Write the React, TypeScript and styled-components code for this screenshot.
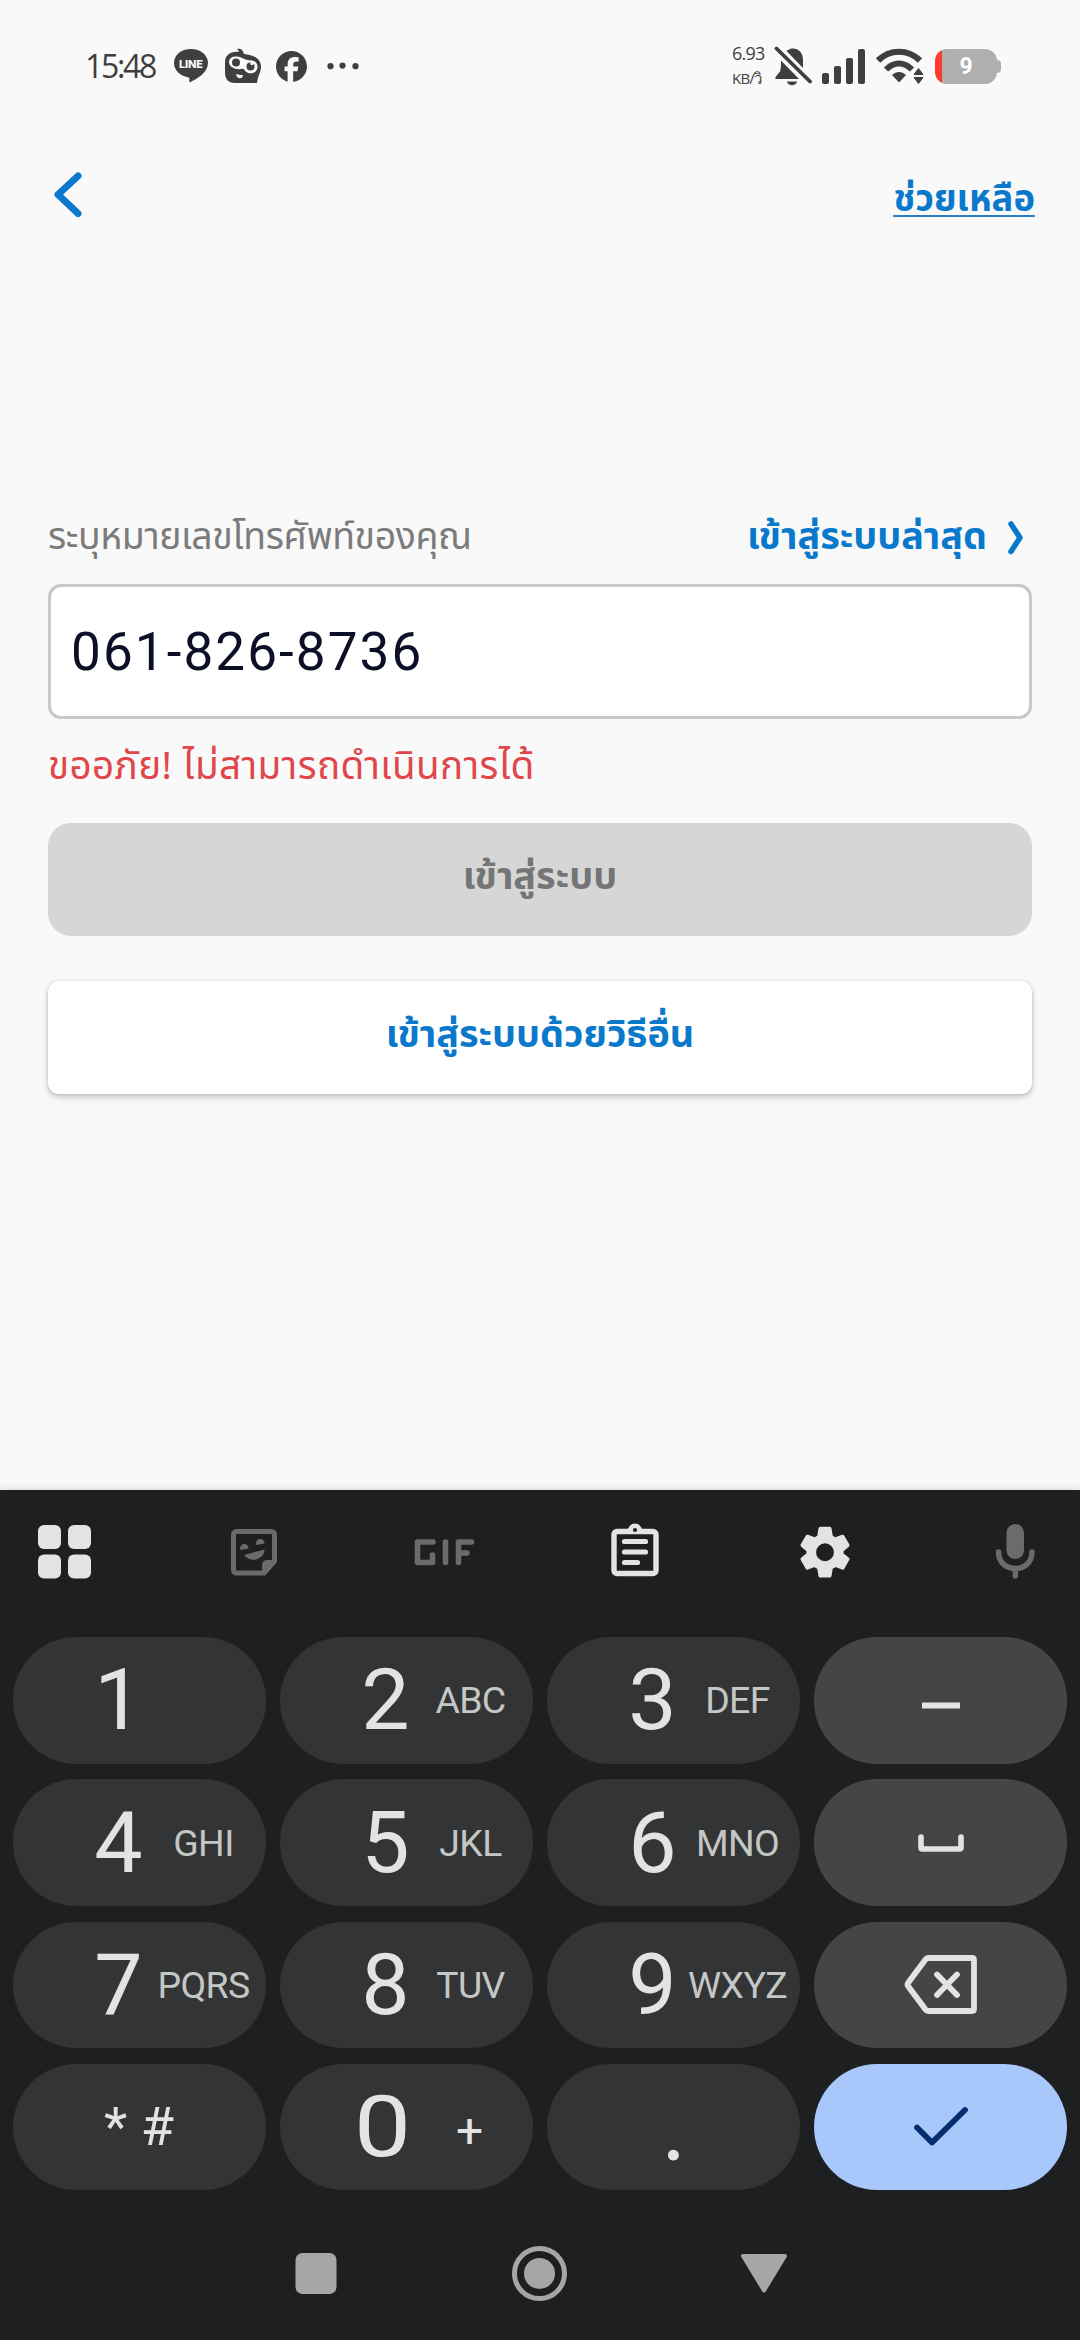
import React from "react";
import styled, { createGlobalStyle } from "styled-components";

const ui = `"Noto Sans Thai", "Noto Sans", "Open Sans", sans-serif`;

const GlobalStyle = createGlobalStyle`
  * { box-sizing: border-box; }
  body { margin: 0; background: #f9f9f9; font-family: ${ui}; }
  button { border: 0; padding: 0; background: none; font: inherit; color: inherit; }
  svg { display: block; flex: none; }
`;

const Screen = styled.div`
  width: 1080px;
  height: 2340px;
  display: flex;
  flex-direction: column;
  overflow: hidden;
`;

const StatusBar = styled.header`
  height: 132px;
  flex: none;
  display: flex;
  justify-content: space-between;
  align-items: flex-start;
  padding: 40px 79px 0 85px;
  color: #3f3f3f;
`;

const StatusGroup = styled.div<{ $gap: number }>`
  height: 52px;
  display: flex;
  align-items: center;
  gap: ${(p) => p.$gap}px;
`;

const Clock = styled.time`
  width: 73px;
  font: 400 32px/52px "Open Sans", sans-serif;
  letter-spacing: -2.3px;
  white-space: nowrap;
`;

const NetSpeed = styled.div`
  display: flex;
  flex-direction: column;
  width: 32px;
  font: 400 18px/25px "Open Sans", sans-serif;
  letter-spacing: -0.8px;
  white-space: nowrap;
`;

const Unit = styled.span`
  font-size: 15px;
`;

const Battery = styled.div`
  display: flex;
  align-items: center;
  height: 35px;
  margin-left: 1px;
`;

const BatteryBody = styled.div`
  width: 62px;
  height: 35px;
  border-radius: 12px;
  display: flex;
  align-items: center;
  justify-content: center;
  color: #fff;
  font: 700 23px/35px Roboto, sans-serif;
  background: linear-gradient(90deg, #ff3b30 7px, #afafaf 7px);
`;

const BatteryTip = styled.div`
  width: 4px;
  height: 13px;
  border-radius: 0 5px 5px 0;
  background: #afafaf;
`;

const TopBar = styled.nav`
  height: 128px;
  flex: none;
  display: flex;
  justify-content: space-between;
  align-items: flex-start;
  padding: 36px 45px 0 50px;
`;

const HelpLink = styled.a`
  margin-top: 10px;
  height: 39px;
  border-bottom: 2px solid #2e7fc0;
  color: #0a79cb;
  font-weight: 700;
  font-size: 36.4px;
  line-height: 44px;
  white-space: nowrap;
`;

const Form = styled.main`
  flex: none;
  height: 1230px;
  display: flex;
  flex-direction: column;
  padding: 246px 48px 0;
`;

const LabelRow = styled.div`
  height: 78px;
  display: flex;
  justify-content: space-between;
  align-items: flex-start;
  padding-right: 6px;
`;

const Label = styled.label`
  color: #7b7b7b;
  font-size: 37.4px;
  letter-spacing: -0.4px;
  line-height: 64px;
  white-space: nowrap;
`;

const RecentLink = styled.a`
  display: flex;
  align-items: center;
  gap: 19px;
  color: #0a79cb;
  font-weight: 700;
  font-size: 37.8px;
  line-height: 63px;
  white-space: nowrap;
`;

const PhoneField = styled.div`
  height: 135px;
  flex: none;
  border: 3px solid #c8c8c8;
  border-radius: 13px;
  background: #fff;
  display: flex;
  align-items: center;
  padding-left: 20px;
  color: #0b1026;
  font: 400 53px/60px Roboto, sans-serif;
  letter-spacing: 2.1px;
`;

const ErrorText = styled.p`
  margin: 17px 0 0;
  height: 87px;
  color: #e0474b;
  font-size: 38.6px;
  letter-spacing: 0.4px;
  line-height: 63px;
  white-space: nowrap;
`;

const Action = styled.button<{ $primary?: boolean }>`
  flex: none;
  height: 113px;
  width: 100%;
  display: flex;
  align-items: center;
  justify-content: center;
  padding-bottom: 3px;
  font-weight: 700;
  font-size: 37.8px;
  line-height: 60px;
  border-radius: ${(p) => (p.$primary ? 23 : 11)}px;
  background: ${(p) => (p.$primary ? "#d6d6d6" : "#ffffff")};
  color: ${(p) => (p.$primary ? "#757575" : "#0a79cb")};
  margin-bottom: ${(p) => (p.$primary ? 45 : 0)}px;
  box-shadow: ${(p) => (p.$primary ? "none" : "0 3px 6px rgba(0,0,0,0.22), 0 0 3px rgba(0,0,0,0.12)")};
`;

const Keyboard = styled.section`
  flex: none;
  height: 850px;
  background: #1e1f21;
  display: flex;
  flex-direction: column;
  box-shadow: 0 0 8px rgba(0, 0, 0, 0.16);
`;

const Tools = styled.div`
  height: 147px;
  padding: 28px 30px 0 29px;
  display: flex;
  justify-content: space-between;
  align-items: flex-start;
`;

const Keys = styled.div`
  padding: 0 13px;
  display: grid;
  grid-template-columns: repeat(4, 253px);
  grid-template-rows: repeat(4, 126.5px);
  column-gap: 14px;
  row-gap: 15.8px;
`;

const Key = styled.button<{ $tone?: "action" | "confirm" }>`
  border-radius: 63px;
  display: flex;
  align-items: center;
  justify-content: ${(p) => (p.$tone ? "center" : "flex-start")};
  padding-left: ${(p) => (p.$tone ? 0 : 62)}px;
  background: ${(p) =>
    p.$tone === "confirm" ? "#a8c7fa" : p.$tone === "action" ? "#444645" : "#333436"};
  color: #e3e3e3;
`;

const Digit = styled.span`
  flex: none;
  width: 87px;
  text-align: center;
  font: 400 86px/100px Roboto, sans-serif;
`;

const Zero = styled(Digit)`
  margin: 0 3px 0 -3px;
  transform: scaleX(1.18);
`;

const Period = styled(Digit)`
  margin-left: 21px;
  font-family: Lato, sans-serif;
`;

const Letters = styled.span`
  flex: none;
  width: 83px;
  display: flex;
  justify-content: center;
  white-space: nowrap;
  color: #c4c7c5;
  font: 400 37.4px/60px Roboto, sans-serif;
  letter-spacing: -0.6px;
`;

const Symbols = styled.span<{ $size: number; $left: number; $top: number; $weight?: number }>`
  font: ${(p) => p.$weight ?? 400} ${(p) => p.$size}px/60px Roboto, sans-serif;
  margin-left: ${(p) => p.$left}px;
  margin-top: ${(p) => p.$top}px;
  white-space: nowrap;
`;

const NavBar = styled.div`
  padding-top: 53px;
  display: flex;
  justify-content: center;
  gap: 164px;
`;

const LineIcon = () => (
  <svg width="36" height="36" viewBox="0 0 36 36">
    <path fill="#3f3f3f" d="M18 1C8.300 1 1 7 1 15c0 7.200 6 13 14 14.200 1.800.4 1.500 1.400 1.200 4.300 0 .6.500.9 1.200.5C23.500 31 35 25 35 15 35 7 27.500 1 18 1Z" />
    <text x="18" y="19.500" textAnchor="middle" fontFamily="Inter, sans-serif" fontWeight="800" fontSize="11" textLength="24" fill="#f9f9f9">LINE</text>
  </svg>
);

const RobotIcon = () => (
  <svg width="37" height="36" viewBox="0 0 37 36">
    <path fill="#3f3f3f" d="M13 1c4-1 6 1 7 5 9 1 17 4 17 13 0 5-3 8-4 16H11C4 35 1 31 1 24V14C1 7 7 3 15 4c0-1-1-2-2-3Z" />
    <path fill="#f9f9f9" d="M12 8.500c4 0 6.500 1.500 9.500 3 3 1.200 6 .5 8.500 1.500 4 2 4.500 7 2 10-3 3.500-9 3-11.500-1-1.500-2-3-.8-5.500-.8-5 0-10-2.700-10-7.200 0-3.500 3-5.500 7-5.500Z" />
    <circle cx="12" cy="14.500" r="4" fill="#3f3f3f" />
    <circle cx="26.500" cy="18.500" r="4" fill="#3f3f3f" />
    <circle cx="28" cy="15.500" r="1.700" fill="#f9f9f9" />
    <path d="M12 26c3 1 5 1 7 1 0 4-6 5-7-1Z" fill="#f9f9f9" />
  </svg>
);

const FacebookIcon = () => (
  <svg width="31" height="31" viewBox="0 0 24 24">
    <path fill="#3f3f3f" d="M24 12.070C24 5.400 18.630 0 12 0S0 5.400 0 12.070c0 5.700 3.900 10.400 9 11.700v-8H6.600v-3.700H9v-1.600c0-4 1.900-5.900 5.900-5.900.8 0 2.100.1 2.600.3v3.400c-.3 0-.8-.1-1.400-.1-2 0-2.800.8-2.800 2.700v1.200h4l-.7 3.700h-3.300v8.200C19.300 23.200 24 18.200 24 12.070Z" />
  </svg>
);

const DotsIcon = () => (
  <svg width="38" height="8" viewBox="0 0 38 8" fill="#3f3f3f">
    <circle cx="8.500" cy="4.200" r="3.100" />
    <circle cx="20.500" cy="3.600" r="3.100" />
    <circle cx="33.500" cy="4.200" r="3.100" />
  </svg>
);

const BellOffIcon = () => (
  <svg width="38" height="40" viewBox="0 0 38 40" fill="#3f3f3f">
    <path d="M13 4.500C20-.5 29 4 29 14v8L12.500 5Z" />
    <path d="M7 14.500 25 33H1.500v-2L6 25.500c1-3 1-7 1-11Z" />
    <path d="M13 35.500h10c-1 5-9 5-10 0Z" />
    <path d="M2.500 2.500 36 35.500" stroke="#3f3f3f" strokeWidth="3.800" strokeLinecap="round" />
  </svg>
);

const SignalIcon = () => (
  <svg width="44" height="35" viewBox="0 0 44 35" fill="#3f3f3f">
    <rect x="0" y="24" width="7" height="11" rx="2" />
    <rect x="12" y="17" width="7" height="18" rx="2" />
    <rect x="24" y="9" width="7" height="26" rx="2" />
    <rect x="36" y="0" width="7" height="35" rx="2" />
  </svg>
);

const WifiIcon = () => (
  <svg width="48" height="36" viewBox="0 0 48 36" fill="none">
    <path d="M2 12.500C14 .8 32 .8 44 12.500" stroke="#3f3f3f" strokeWidth="6.200" />
    <path d="M10 21.500C18 13.500 28 13.500 36 21.500" stroke="#3f3f3f" strokeWidth="6" />
    <path d="M16 27c4.500-4 9.500-4 14 0l-7 7.500Z" fill="#3f3f3f" />
    <path d="M38 26.500 42.500 20.500 47 26.500Z M38 29.500h9L42.500 35.500Z" fill="#3f3f3f" stroke="#3f3f3f" strokeWidth="1" strokeLinejoin="round" />
  </svg>
);

const BackIcon = () => (
  <svg width="36" height="54" viewBox="0 0 36 54" fill="none">
    <path d="M28 8 8 26.500 28 45.500" stroke="#0a79cb" strokeWidth="7" strokeLinecap="round" strokeLinejoin="round" />
  </svg>
);

const ForwardIcon = () => (
  <svg width="20" height="38" viewBox="0 0 20 38" fill="none">
    <path d="M5 5 14 18.700 5 32.500" stroke="#0a79cb" strokeWidth="5.500" strokeLinecap="round" strokeLinejoin="round" />
  </svg>
);

const Tool = ({ children, color = "#e3e3e3" }: { children: React.ReactNode; color?: string }) => (
  <svg width="70" height="70" viewBox="0 0 70 70" fill={color}>
    {children}
  </svg>
);

const GridTool = () => (
  <Tool>
    <rect x="9" y="7" width="23" height="24" rx="6" />
    <rect x="39" y="7" width="23" height="24" rx="6" />
    <rect x="9" y="36.500" width="23" height="24" rx="6" />
    <rect x="39" y="36.500" width="23" height="24" rx="6" />
  </Tool>
);

const StickerTool = () => (
  <Tool color="#6b6b6b">
    <path d="M16 13.500h35a3 3 0 0 1 3 3V43L43.500 55H16a3 3 0 0 1-3-3V16.500a3 3 0 0 1 3-3Z" fill="none" stroke="#6b6b6b" strokeWidth="5" strokeLinejoin="round" transform="translate(1.500 0)" />
    <path d="M55 42 43 56V47a5 5 0 0 1 5-5Z" />
    <path d="M21.500 32a4.200 4.200 0 1 1 8-1.500Z M37.500 27a4.200 4.200 0 1 1 8-1.500Z M25 37l20.500-5.500C45.500 41 32 46 25 37Z" />
  </Tool>
);

const GifTool = () => (
  <Tool color="none">
    <g stroke="#6b6b6b" strokeWidth="5.600" strokeLinecap="round" strokeLinejoin="round">
      <path d="M24 24H8.500V44.500H23.500V37" />
      <path d="M36.500 24V44.500" />
      <path d="M49.500 44.500V24H62.500M49.500 35H58" />
    </g>
  </Tool>
);

const ClipboardTool = () => (
  <Tool color="none">
    <rect x="14" y="13.500" width="42" height="42" rx="3" stroke="#e3e3e3" strokeWidth="5.400" />
    <path d="M27.500 14a7.500 8.500 0 0 1 15 0Z" fill="#e3e3e3" />
    <circle cx="35" cy="12" r="2.100" fill="#1e1f21" />
    <path d="M24.500 23.500H45.500M24.500 34H45.500M24.500 44.500H37.500" stroke="#e3e3e3" strokeWidth="5.200" strokeLinecap="round" />
  </Tool>
);

const GearTool = () => (
  <Tool>
    <path
      fillRule="evenodd"
      stroke="#e3e3e3"
      strokeWidth="4"
      strokeLinejoin="round"
      transform="translate(2.100 1.800) scale(0.94)"
      d="M30 9.500h10l1.400 8.700 4.600 2.600 7.800-2.900 5.300 9.200-6.300 5.300v4.200l6.300 5.300-5.300 9.200-7.800-2.900-4.600 2.600L40 59.500h-10l-1.400-8.700-4.600-2.600-7.800 2.900-5.300-9.200 6.300-5.300v-4.200l-6.300-5.300 5.300-9.200 7.800 2.900 4.600-2.600Z M35 23a11.500 11.500 0 1 0 0 23 11.500 11.500 0 0 0 0-23Z"
    />
  </Tool>
);

const MicTool = () => (
  <Tool color="#6b6b6b">
    <rect x="26.500" y="6" width="17.500" height="35" rx="8.700" />
    <path d="M18.500 34c0 22 33.500 22 33.500 0M35.300 51V58" fill="none" stroke="#6b6b6b" strokeWidth="5.500" strokeLinecap="round" />
  </Tool>
);

const DashIcon = () => (
  <svg width="38" height="20" viewBox="0 0 38 20">
    <rect y="12.500" width="38" height="6" fill="#e3e3e3" />
  </svg>
);

const SpaceIcon = () => (
  <svg width="46" height="18" viewBox="0 0 46 18" fill="none">
    <path d="M3 3V13.500Q3 15 4.500 15H41.500Q43 15 43 13.500V3" stroke="#e3e3e3" strokeWidth="5.600" strokeLinecap="round" />
  </svg>
);

const BackspaceIcon = () => (
  <svg width="76" height="60" viewBox="0 0 76 60" fill="none" stroke="#e3e3e3" strokeWidth="5.800" strokeLinecap="round" strokeLinejoin="round">
    <path d="M25 3H69Q71 3 71 5V54Q71 56 69 56H25Q23.500 56 22.500 54.500L5 31Q4 29.500 5 28L22.500 4.500Q23.500 3 25 3Z" />
    <path d="M34 19.500 54 40M54 19.500 34 40" />
  </svg>
);

const CheckIcon = () => (
  <svg width="56" height="42" viewBox="0 0 56 42" fill="none">
    <path d="M4 21.500 19 36.500 52 4" stroke="#062e6f" strokeWidth="5.800" strokeLinecap="round" strokeLinejoin="round" />
  </svg>
);

const RecentsIcon = () => (
  <svg width="60" height="60" viewBox="0 0 60 60">
    <rect x="9.500" y="10" width="41" height="41" rx="7" fill="#a6a6a6" />
  </svg>
);

const HomeIcon = () => (
  <svg width="60" height="60" viewBox="0 0 60 60">
    <circle cx="29.500" cy="30.500" r="25" fill="none" stroke="#a6a6a6" strokeWidth="5" />
    <circle cx="29.500" cy="30.500" r="15.500" fill="#a6a6a6" />
  </svg>
);

const HideIcon = () => (
  <svg width="60" height="60" viewBox="0 0 60 60">
    <path d="M9 13H51L30 47.500Z" fill="#a6a6a6" stroke="#a6a6a6" strokeWidth="4" strokeLinejoin="round" />
  </svg>
);

const NumberKey = ({ digit, letters }: { digit: string; letters?: string }) => (
  <Key>
    <Digit>{digit}</Digit>
    {letters && <Letters>{letters}</Letters>}
  </Key>
);

export default function App() {
  return (
    <Screen>
      <GlobalStyle />
      <StatusBar>
        <StatusGroup $gap={15}>
          <Clock>15:48</Clock>
          <LineIcon />
          <RobotIcon />
          <FacebookIcon />
          <DotsIcon />
        </StatusGroup>
        <StatusGroup $gap={10}>
          <NetSpeed>
            <span>6.93</span>
            <Unit>KB/วิ</Unit>
          </NetSpeed>
          <BellOffIcon />
          <SignalIcon />
          <WifiIcon />
          <Battery>
            <BatteryBody>9</BatteryBody>
            <BatteryTip />
          </Battery>
        </StatusGroup>
      </StatusBar>

      <TopBar>
        <BackIcon />
        <HelpLink>ช่วยเหลือ</HelpLink>
      </TopBar>

      <Form>
        <LabelRow>
          <Label>ระบุหมายเลขโทรศัพท์ของคุณ</Label>
          <RecentLink>
            เข้าสู่ระบบล่าสุด
            <ForwardIcon />
          </RecentLink>
        </LabelRow>
        <PhoneField>061-826-8736</PhoneField>
        <ErrorText>ขออภัย! ไม่สามารถดำเนินการได้</ErrorText>
        <Action $primary>เข้าสู่ระบบ</Action>
        <Action>เข้าสู่ระบบด้วยวิธีอื่น</Action>
      </Form>

      <Keyboard>
        <Tools>
          <GridTool />
          <StickerTool />
          <GifTool />
          <ClipboardTool />
          <GearTool />
          <MicTool />
        </Tools>
        <Keys>
          <NumberKey digit="1" />
          <NumberKey digit="2" letters="ABC" />
          <NumberKey digit="3" letters="DEF" />
          <Key $tone="action"><DashIcon /></Key>
          <NumberKey digit="4" letters="GHI" />
          <NumberKey digit="5" letters="JKL" />
          <NumberKey digit="6" letters="MNO" />
          <Key $tone="action"><SpaceIcon /></Key>
          <NumberKey digit="7" letters="PQRS" />
          <NumberKey digit="8" letters="TUV" />
          <NumberKey digit="9" letters="WXYZ" />
          <Key $tone="action"><BackspaceIcon /></Key>
          <Key>
            <Symbols $size={54} $left={29} $top={0}>* #</Symbols>
          </Key>
          <Key>
            <Zero>0</Zero>
            <Symbols $size={48} $left={27} $top={8} $weight={400}>+</Symbols>
          </Key>
          <Key>
            <Period>.</Period>
          </Key>
          <Key $tone="confirm"><CheckIcon /></Key>
        </Keys>
        <NavBar>
          <RecentsIcon />
          <HomeIcon />
          <HideIcon />
        </NavBar>
      </Keyboard>
    </Screen>
  );
}
